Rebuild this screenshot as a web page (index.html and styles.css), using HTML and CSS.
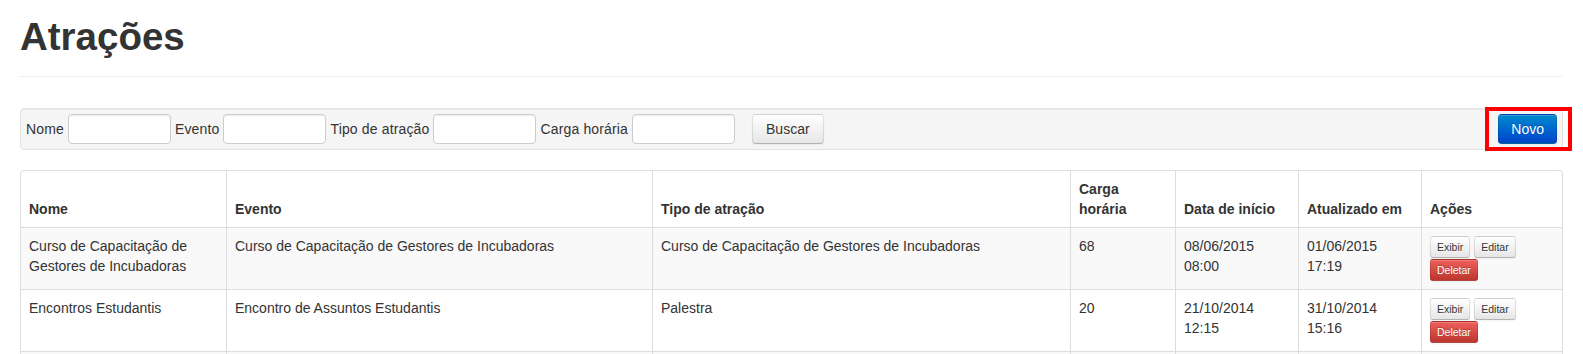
FILE: index.html
```html
<!DOCTYPE html>
<html lang="pt-BR">
<head>
<meta charset="utf-8">
<title>Atrações</title>
<link rel="stylesheet" href="styles.css">
</head>
<body>
<div class="page">
  <div class="page-header">
    <h1>Atrações</h1>
  </div>

  <div class="well">
    <form class="search">
      <label>Nome</label>
      <input type="text">
      <label>Evento</label>
      <input type="text">
      <label>Tipo de atração</label>
      <input type="text">
      <label>Carga horária</label>
      <input type="text">
      <button type="button" class="btn btn-search">Buscar</button>
    </form>
    <span class="highlight">
      <a class="btn btn-primary">Novo</a>
      <span class="highlight-box"></span>
    </span>
  </div>

  <table class="table">
    <thead>
      <tr>
        <th class="c-nome">Nome</th>
        <th class="c-evento">Evento</th>
        <th class="c-tipo">Tipo de atração</th>
        <th class="c-carga">Carga horária</th>
        <th class="c-data">Data de início</th>
        <th class="c-data">Atualizado em</th>
        <th>Ações</th>
      </tr>
    </thead>
    <tbody>
      <tr>
        <td>Curso de Capacitação de Gestores de Incubadoras</td>
        <td>Curso de Capacitação de Gestores de Incubadoras</td>
        <td>Curso de Capacitação de Gestores de Incubadoras</td>
        <td>68</td>
        <td>08/06/2015 08:00</td>
        <td>01/06/2015 17:19</td>
        <td><div class="actions"><a class="btn btn-mini">Exibir</a><a class="btn btn-mini">Editar</a><a class="btn btn-mini btn-danger">Deletar</a></div></td>
      </tr>
      <tr>
        <td>Encontros Estudantis</td>
        <td>Encontro de Assuntos Estudantis</td>
        <td>Palestra</td>
        <td>20</td>
        <td>21/10/2014 12:15</td>
        <td>31/10/2014 15:16</td>
        <td><div class="actions"><a class="btn btn-mini">Exibir</a><a class="btn btn-mini">Editar</a><a class="btn btn-mini btn-danger">Deletar</a></div></td>
      </tr>
      <tr>
        <td>Semana Acadêmica</td>
        <td>Semana Acadêmica</td>
        <td>Palestra</td>
        <td>10</td>
        <td>15/09/2014 09:00</td>
        <td>20/09/2014 10:30</td>
        <td><div class="actions"><a class="btn btn-mini">Exibir</a><a class="btn btn-mini">Editar</a><a class="btn btn-mini btn-danger">Deletar</a></div></td>
      </tr>
    </tbody>
  </table>
</div>
</body>
</html>
```

FILE: styles.css
```css
body {
  margin: 0;
  font-family: "Liberation Sans", Arial, sans-serif;
  font-size: 14px;
  line-height: 20px;
  color: #333;
  background: #fff;
}

.page {
  padding: 0 20px;
}

.page-header {
  border-bottom: 1px solid #eee;
  padding-bottom: 9px;
  margin-bottom: 31px;
}

.page-header h1 {
  margin: 17px 0 10px;
  font-size: 38.5px;
  line-height: 40px;
  font-weight: bold;
  color: #333;
}

.well {
  display: flex;
  justify-content: space-between;
  align-items: center;
  padding: 5px;
  background: #f5f5f5;
  border: 1px solid #e3e3e3;
  border-radius: 4px;
  box-shadow: inset 0 1px 1px rgba(0, 0, 0, 0.05);
  margin-bottom: 20px;
}

.search {
  display: flex;
  align-items: center;
  gap: 4px;
  margin: 0;
}

.search label {
  color: #333;
  letter-spacing: 0.15px;
}

.search input {
  width: 103px;
  height: 30px;
  box-sizing: border-box;
  margin: 0;
  padding: 4px 6px;
  border: 1px solid #ccc;
  border-radius: 4px;
  background: #fff;
  box-shadow: inset 0 1px 1px rgba(0, 0, 0, 0.075);
  font: inherit;
  color: #555;
}

.btn {
  display: inline-block;
  box-sizing: border-box;
  margin: 0;
  padding: 4px 12px;
  font-family: inherit;
  font-size: 14px;
  line-height: 20px;
  color: #333;
  text-align: center;
  text-decoration: none;
  text-shadow: 0 1px 1px rgba(255, 255, 255, 0.75);
  background: linear-gradient(#ffffff, #e6e6e6);
  border: 1px solid #ccc;
  border-color: rgba(0, 0, 0, 0.1) rgba(0, 0, 0, 0.1) rgba(0, 0, 0, 0.25);
  border-bottom-color: #b3b3b3;
  border-radius: 4px;
  box-shadow: inset 0 1px 0 rgba(255, 255, 255, 0.2), 0 1px 2px rgba(0, 0, 0, 0.05);
  cursor: pointer;
}

.btn-search {
  margin-left: 13px;
  padding: 4px 13px;
}

.btn-primary {
  color: #fff;
  text-shadow: 0 -1px 0 rgba(0, 0, 0, 0.25);
  background: linear-gradient(#0088cc, #0044cc);
  border-color: rgba(0, 0, 0, 0.1) rgba(0, 0, 0, 0.1) rgba(0, 0, 0, 0.25);
}

.btn-danger {
  color: #fff;
  text-shadow: 0 -1px 0 rgba(0, 0, 0, 0.25);
  background: linear-gradient(#ee5f5b, #bd362f);
  border-color: rgba(0, 0, 0, 0.1) rgba(0, 0, 0, 0.1) rgba(0, 0, 0, 0.25);
}

.btn-mini {
  padding: 0 6px;
  font-size: 10.5px;
  line-height: 20px;
  border-radius: 3px;
}

.highlight {
  position: relative;
  display: inline-block;
}

.highlight .btn {
  display: block;
}

.highlight-box {
  position: absolute;
  top: -7px;
  bottom: -7px;
  left: -13px;
  right: -15px;
  border: 4px solid #ff0000;
  pointer-events: none;
}

.table {
  width: 100%;
  table-layout: fixed;
  border-collapse: separate;
  border-spacing: 0;
  border: 1px solid #ddd;
  border-left: 0;
  border-radius: 4px;
  margin-bottom: 20px;
}

.table th,
.table td {
  box-sizing: border-box;
  padding: 8px;
  line-height: 20px;
  text-align: left;
  vertical-align: top;
  border-left: 1px solid #ddd;
  border-top: 1px solid #ddd;
}

.table thead th {
  vertical-align: bottom;
  font-weight: bold;
  border-top: 0;
}

.table thead th:first-child {
  border-top-left-radius: 4px;
}

.table thead th:last-child {
  border-top-right-radius: 4px;
}

.table tbody tr:nth-child(odd) td {
  background: #f9f9f9;
}

.c-nome { width: 206px; }
.c-evento { width: 426px; }
.c-tipo { width: 418px; }
.c-carga { width: 105px; }
.c-data { width: 123px; }

.actions {
  display: flex;
  flex-wrap: wrap;
  gap: 1px 4px;
}
```
